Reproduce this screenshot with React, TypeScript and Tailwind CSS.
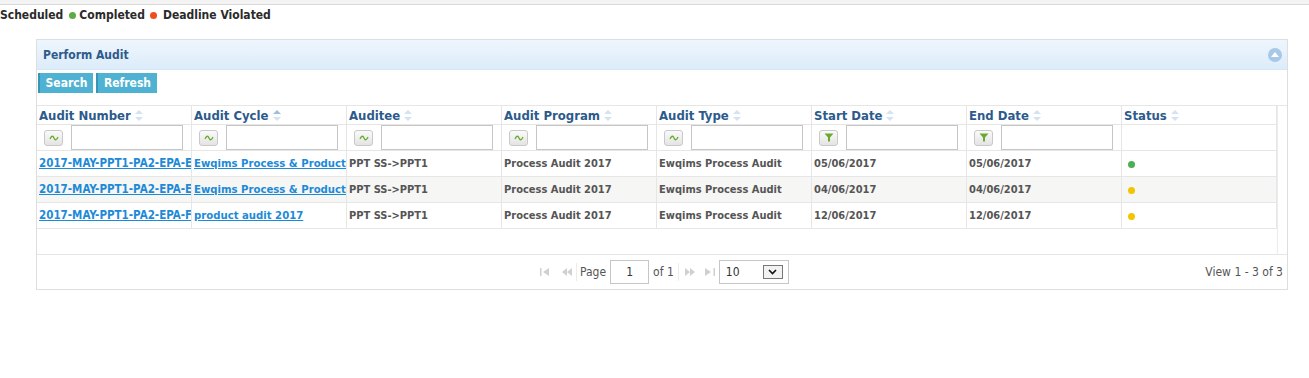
import React from 'react';

const font = { fontFamily: '"DejaVu Sans Condensed", "Liberation Sans", sans-serif' };

const columns = [
  { label: 'Audit Number', filter: 'cn', sorted: false },
  { label: 'Audit Cycle', filter: 'cn', sorted: true },
  { label: 'Auditee', filter: 'cn', sorted: false },
  { label: 'Audit Program', filter: 'cn', sorted: false },
  { label: 'Audit Type', filter: 'cn', sorted: false },
  { label: 'Start Date', filter: 'eq', sorted: false },
  { label: 'End Date', filter: 'eq', sorted: false },
  { label: 'Status', filter: null, sorted: false },
];

const rows = [
  {
    number: '2017-MAY-PPT1-PA2-EPA-E',
    cycle: 'Ewqims Process & Product audit 2017',
    start: '05/06/2017',
    end: '05/06/2017',
    status: 'bg-[#4caf50]',
  },
  {
    number: '2017-MAY-PPT1-PA2-EPA-E',
    cycle: 'Ewqims Process & Product audit 2017',
    start: '04/06/2017',
    end: '04/06/2017',
    status: 'bg-[#f2c500]',
  },
  {
    number: '2017-MAY-PPT1-PA2-EPA-F',
    cycle: 'product audit 2017',
    start: '12/06/2017',
    end: '12/06/2017',
    status: 'bg-[#f2c500]',
  },
];

function SortIcon({ up }: { up: boolean }) {
  return (
    <svg width="8" height="11" viewBox="0 0 8 11" className="ml-[4px] shrink-0">
      <path d="M4 0 L8 4 L0 4 Z" fill={up ? '#9cbfe0' : '#d3e3f2'} />
      <path d="M4 11 L8 7 L0 7 Z" fill="#d3e3f2" />
    </svg>
  );
}

function FilterButton({ kind }: { kind: string }) {
  return (
    <div className="w-[19px] h-[16px] rounded-[3px] border border-[#c9c9c9] bg-gradient-to-b from-[#fafafa] to-[#e4e4e4] flex items-center justify-center shrink-0">
      {kind === 'cn' ? (
        <svg width="10" height="6" viewBox="0 0 10 6">
          <path d="M1 4 C2.5 0.5 4 0.5 5 3 C6 5.5 7.5 5.5 9 2" stroke="#6aab2e" strokeWidth="1.3" fill="none" />
        </svg>
      ) : (
        <svg width="10" height="9" viewBox="0 0 10 9">
          <path d="M0.5 0.5 H9.5 L6 4.5 V8.5 H4 V4.5 Z" fill="#6aab2e" />
        </svg>
      )}
    </div>
  );
}

function PagerIcon({ d }: { d: string }) {
  return (
    <svg width="10" height="8" viewBox="0 0 10 8" className="shrink-0">
      <path d={d} fill="#d0d0d0" />
    </svg>
  );
}

export default function App() {
  return (
    <div className="w-[1309px] h-[378px] bg-white text-[#333]" style={font}>
      <div className="h-[5px] bg-[#f3f3f3] border-b border-[#d9d9d9]" />

      {/* Legend */}
      <div className="flex items-center h-[20px] text-[12px] font-bold text-[#2a2a2a]">
        <span>Scheduled</span>
        <span className="w-[7px] h-[7px] rounded-full bg-[#5cac45] ml-[6px] mr-[3px]" />
        <span>Completed</span>
        <span className="w-[7px] h-[7px] rounded-full bg-[#f04d1c] ml-[5px] mr-[6px]" />
        <span>Deadline Violated</span>
      </div>

      {/* Panel */}
      <div className="ml-[36px] mt-[14px] w-[1252px] border border-[#dedede]">
        <div className="h-[30px] flex items-center justify-between px-[6px] bg-gradient-to-b from-[#eef6fd] to-[#dcecfa] border-b border-[#d6e6f4]">
          <span className="text-[12px] font-bold text-[#2f5b8b]">Perform Audit</span>
          <div className="w-[14px] h-[14px] rounded-full bg-[#a7c8e6] flex items-center justify-center mr-[-1px]">
            <svg width="8" height="5" viewBox="0 0 8 5">
              <path d="M4 0 L8 5 L0 5 Z" fill="#ffffff" />
            </svg>
          </div>
        </div>

        <div className="flex gap-[3px] pl-[1px] pt-[3px] h-[35px]">
          <button className="w-[55px] h-[20px] bg-[#4fb2d2] border-l-2 border-[#3795b5] text-white text-[12px] font-bold">
            Search
          </button>
          <button className="w-[61px] h-[20px] bg-[#4fb2d2] border-l-2 border-[#3795b5] text-white text-[12px] font-bold">
            Refresh
          </button>
        </div>

        {/* Grid */}
        <div className="border-t border-[#e6e6e6]">
          <div className="flex">
            <div className="w-[1240px]">
              {/* header */}
              <div className="flex h-[19px] border-b border-[#e6e6e6]">
                {columns.map((c) => (
                  <div
                    key={c.label}
                    className="w-[155px] shrink-0 border-r border-[#e6e6e6] flex items-center pl-[2px] pt-[1px] text-[13px] font-bold text-[#2c5a8c]"
                  >
                    <span>{c.label}</span>
                    <SortIcon up={c.sorted} />
                  </div>
                ))}
              </div>
              {/* filter */}
              <div className="flex h-[26px] border-b border-[#e6e6e6]">
                {columns.map((c) => (
                  <div
                    key={c.label}
                    className="w-[155px] shrink-0 border-r border-[#e6e6e6] flex items-center pl-[7px] gap-[8px]"
                  >
                    {c.filter && (
                      <>
                        <FilterButton kind={c.filter} />
                        <input className="w-[112px] h-[25px] border border-[#c6c6c6] bg-white outline-none" />
                      </>
                    )}
                  </div>
                ))}
              </div>
              {/* rows */}
              {rows.map((r, i) => (
                <div
                  key={i}
                  className={`flex h-[26px] border-b border-[#e6e6e6] text-[11px] font-bold text-[#555] ${
                    i === 1 ? 'bg-[#f6f6f4]' : 'bg-white'
                  }`}
                >
                  <div className="w-[155px] shrink-0 border-r border-[#e6e6e6] flex items-center pl-[2px] pt-[1px] overflow-hidden whitespace-nowrap">
                    <a className="text-[#1d8ad8] underline text-[11.5px]">{r.number}</a>
                  </div>
                  <div className="w-[155px] shrink-0 border-r border-[#e6e6e6] flex items-center pl-[2px] pt-[1px] overflow-hidden whitespace-nowrap">
                    <a className="text-[#1d8ad8] underline text-[11.25px]">{r.cycle}</a>
                  </div>
                  <div className="w-[155px] shrink-0 border-r border-[#e6e6e6] flex items-center pl-[2px] pt-[1px] whitespace-nowrap">
                    PPT SS-&gt;PPT1
                  </div>
                  <div className="w-[155px] shrink-0 border-r border-[#e6e6e6] flex items-center pl-[2px] pt-[1px] whitespace-nowrap">
                    Process Audit 2017
                  </div>
                  <div className="w-[155px] shrink-0 border-r border-[#e6e6e6] flex items-center pl-[2px] pt-[1px] whitespace-nowrap">
                    Ewqims Process Audit
                  </div>
                  <div className="w-[155px] shrink-0 border-r border-[#e6e6e6] flex items-center pl-[2px] pt-[1px] whitespace-nowrap">
                    {r.start}
                  </div>
                  <div className="w-[155px] shrink-0 border-r border-[#e6e6e6] flex items-center pl-[2px] pt-[1px] whitespace-nowrap">
                    {r.end}
                  </div>
                  <div className="w-[155px] shrink-0 border-r border-[#e6e6e6] flex items-center pl-[6px] pt-[1px]">
                    <span className={`w-[7px] h-[7px] rounded-full ${r.status}`} />
                  </div>
                </div>
              ))}
              <div className="h-[25px]" />
            </div>
            <div className="flex-1 border-l border-[#ececec]" />
          </div>

          {/* pager */}
          <div className="h-[35px] border-t border-[#e6e6e6] flex items-center relative text-[12px] text-[#555]">
            <div className="flex items-center ml-[503px]">
              <PagerIcon d="M0 0 H1.5 V8 H0 Z M9 0 V8 L3 4 Z" />
              <span className="w-[12px]" />
              <PagerIcon d="M5 0 V8 L0 4 Z M10 0 V8 L5 4 Z" />
              <span className="w-px h-[18px] bg-[#ececec] ml-[4px] mr-[3px]" />
              <span>Page</span>
              <input
                defaultValue="1"
                className="w-[39px] h-[24px] border border-[#c6c6c6] ml-[4px] text-center text-[12px] text-[#333] outline-none"
              />
              <span className="ml-[4px]">of 1</span>
              <span className="w-px h-[18px] bg-[#ececec] ml-[4px] mr-[6px]" />
              <PagerIcon d="M0 0 V8 L5 4 Z M5 0 V8 L10 4 Z" />
              <span className="w-[10px]" />
              <PagerIcon d="M0 0 V8 L6 4 Z M8.5 0 H10 V8 H8.5 Z" />
              <div className="ml-[4px] w-[70px] h-[24px] border border-[#c6c6c6] flex items-center justify-between pl-[6px] pr-[5px] text-[#333]">
                <span>10</span>
                <div className="w-[20px] h-[14px] border border-[#777] bg-[#f2f2f2] flex items-center justify-center">
                  <svg width="9" height="6" viewBox="0 0 9 6">
                    <path d="M1 1 L4.5 4.5 L8 1" stroke="#111" strokeWidth="1.6" fill="none" />
                  </svg>
                </div>
              </div>
            </div>
            <span className="absolute right-[4px]">View 1 - 3 of 3</span>
          </div>
        </div>
      </div>
    </div>
  );
}
